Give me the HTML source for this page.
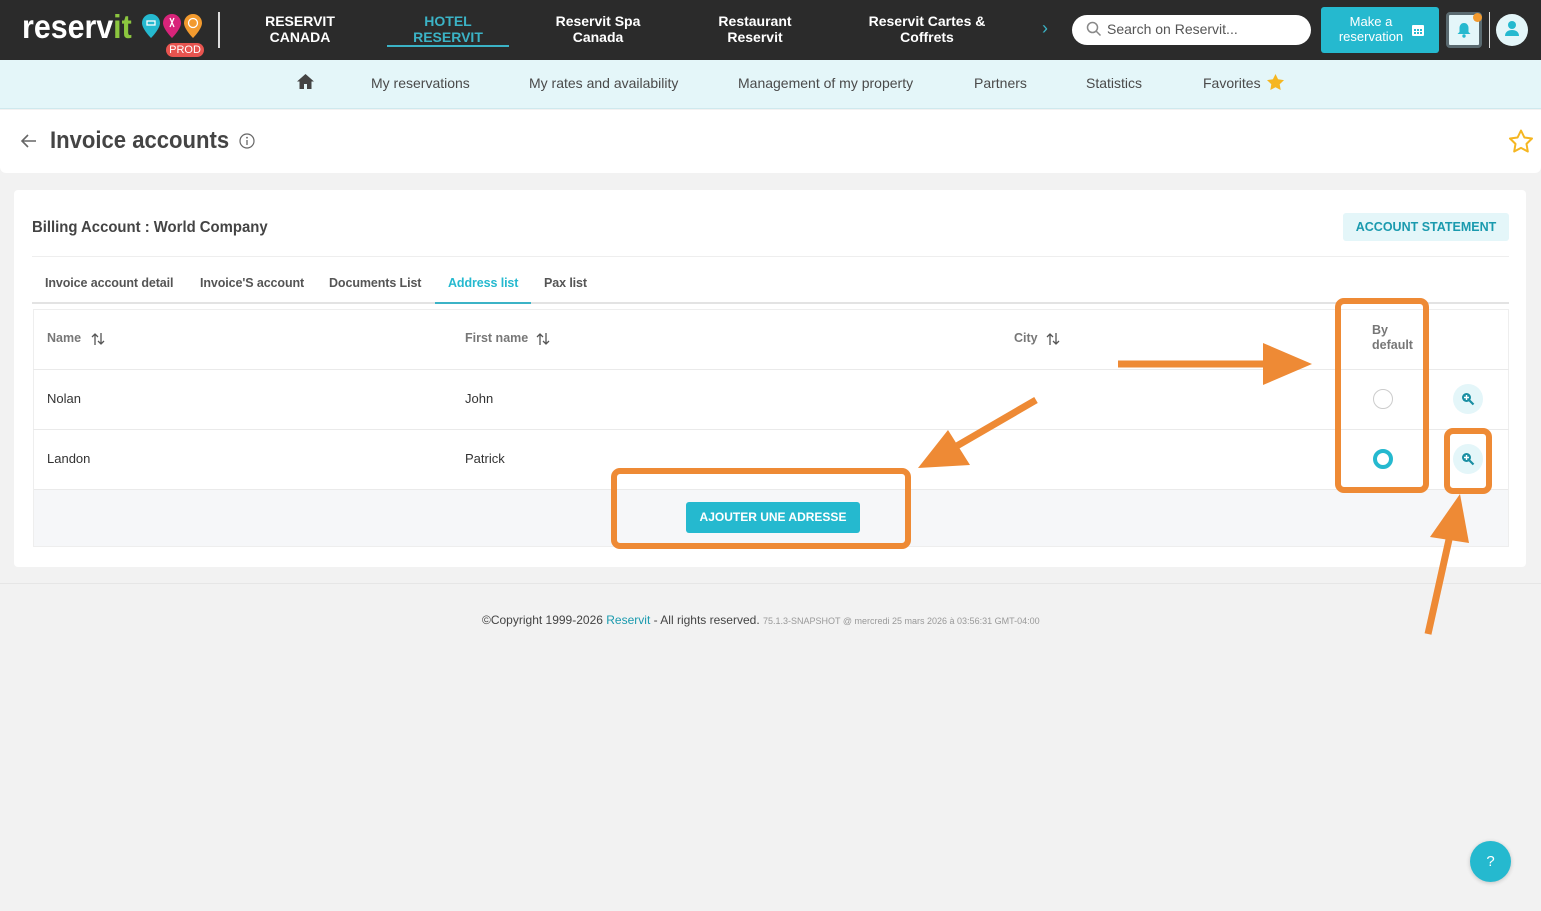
<!DOCTYPE html>
<html><head><meta charset="utf-8">
<style>
*{margin:0;padding:0;box-sizing:border-box}
body{width:1541px;height:911px;background:#f2f2f2;font-family:"Liberation Sans",Arial,sans-serif;position:relative;overflow:hidden;color:#444}
.a{position:absolute}
.top{left:0;top:0;width:1541px;height:60px;background:#2b2b2b}
.nav{color:#fff;font-weight:bold;font-size:14px;text-align:center;line-height:16px}
.sub{left:0;top:60px;width:1541px;height:49px;background:#e4f6f9;border-bottom:1px solid #cfe9ee}
.sub span{position:absolute;top:15px;font-size:14px;color:#4a4a4a}
.tabs span{position:absolute;top:276px;font-size:12.5px;font-weight:bold;color:#555;letter-spacing:-0.1px}
.th{font-size:12.5px;font-weight:bold;color:#777}
.td{font-size:13px;color:#333}
.ob{border:6px solid #ee8a35;border-radius:9px}
</style></head><body>
<div class="a top"></div>
<div class="a" style="left:22px;top:8px;font-size:33px;font-weight:bold;color:#fff;transform:scaleX(0.92);transform-origin:left top;white-space:nowrap">reserv<span style="color:#8cc63f">it</span></div>
<svg class="a" style="left:141px;top:13px" width="64" height="28" viewBox="0 0 64 28">
<path d="M10 1a9 9 0 0 1 9 9c0 6-9 15-9 15S1 16 1 10a9 9 0 0 1 9-9z" fill="#25b9cf"/>
<path d="M31 1a9 9 0 0 1 9 9c0 6-9 15-9 15S22 16 22 10a9 9 0 0 1 9-9z" fill="#d8247a"/>
<path d="M52 1a9 9 0 0 1 9 9c0 6-9 15-9 15S43 16 43 10a9 9 0 0 1 9-9z" fill="#f29a2e"/>
<rect x="6" y="8" width="8" height="4" fill="none" stroke="#fff" stroke-width="1.3"/>
<path d="M29 5l4 9M33 5l-4 9" stroke="#fff" stroke-width="1.3"/>
<circle cx="52" cy="10" r="4.5" fill="none" stroke="#fff" stroke-width="1.3"/>
</svg>
<div class="a" style="left:166px;top:43px;width:38px;height:14px;background:#e8544f;border-radius:7px;color:#fff;font-size:11px;text-align:center;line-height:14px">PROD</div>
<div class="a" style="left:218px;top:12px;width:2px;height:36px;background:#ddd"></div>
<div class="a nav" style="left:250px;top:13px;width:100px">RESERVIT<br>CANADA</div>
<div class="a nav" style="left:387px;top:13px;width:122px;color:#3bb3c6">HOTEL<br>RESERVIT</div>
<div class="a" style="left:387px;top:45px;width:122px;height:2px;background:#3bb3c6"></div>
<div class="a nav" style="left:548px;top:13px;width:100px">Reservit Spa<br>Canada</div>
<div class="a nav" style="left:705px;top:13px;width:100px">Restaurant<br>Reservit</div>
<div class="a nav" style="left:862px;top:13px;width:130px">Reservit Cartes &amp;<br>Coffrets</div>
<div class="a" style="left:1042px;top:18px;color:#3bb3c6;font-size:18px">›</div>
<div class="a" style="left:1072px;top:15px;width:239px;height:30px;background:#fff;border-radius:15px"></div>
<svg class="a" style="left:1086px;top:21px" width="16" height="16"><circle cx="6.5" cy="6.5" r="5" fill="none" stroke="#888" stroke-width="1.5"/><path d="M10 10l4.5 4.5" stroke="#888" stroke-width="1.5"/></svg>
<div class="a" style="left:1107px;top:21px;font-size:14px;color:#555">Search on Reservit...</div>
<div class="a" style="left:1321px;top:7px;width:118px;height:46px;background:#25b9cf;border-radius:3px"></div>
<div class="a" style="left:1330px;top:14px;width:82px;text-align:center;color:#fff;font-size:13px;line-height:15px">Make a<br>reservation</div>
<svg class="a" style="left:1412px;top:23px" width="12" height="13"><rect x="0" y="2" width="12" height="11" rx="1" fill="#fff"/><g fill="#25b9cf"><rect x="2" y="6" width="2" height="2"/><rect x="5" y="6" width="2" height="2"/><rect x="8" y="6" width="2" height="2"/><rect x="2" y="9" width="2" height="2"/><rect x="5" y="9" width="2" height="2"/><rect x="8" y="9" width="2" height="2"/></g></svg>
<div class="a" style="left:1446px;top:12px;width:36px;height:36px;background:#e4f6f9;border:3px solid #5a6a70;border-radius:4px"></div>
<svg class="a" style="left:1457px;top:22px" width="14" height="16"><path d="M7 1c3 0 4.5 2.5 4.5 5v4l2 2H0.5l2-2V6C2.5 3.5 4 1 7 1z" fill="#25b9cf"/><circle cx="7" cy="14" r="1.7" fill="#25b9cf"/></svg>
<div class="a" style="left:1473px;top:13px;width:9px;height:9px;background:#f29a2e;border-radius:50%"></div>
<div class="a" style="left:1489px;top:12px;width:1px;height:36px;background:#ddd"></div>
<div class="a" style="left:1496px;top:14px;width:32px;height:32px;background:#e4f6f9;border-radius:50%"></div>
<svg class="a" style="left:1504px;top:20px" width="16" height="18"><circle cx="8" cy="5" r="4" fill="#25b9cf"/><path d="M1 16c0-4 3-6 7-6s7 2 7 6z" fill="#25b9cf"/></svg>

<div class="a sub">
<svg style="position:absolute;left:297px;top:14px" width="17" height="15"><path d="M8.5 0L0 7.5h2.5V15h4.5v-5h3v5h4.5V7.5H17z" fill="#444"/></svg>
<span style="left:371px">My reservations</span>
<span style="left:529px">My rates and availability</span>
<span style="left:738px">Management of my property</span>
<span style="left:974px">Partners</span>
<span style="left:1086px">Statistics</span>
<span style="left:1203px">Favorites</span>
<svg style="position:absolute;left:1267px;top:14px" width="17" height="16"><path d="M8.5 0l2.6 5.3 5.9.8-4.3 4.1 1 5.8-5.2-2.7-5.2 2.7 1-5.8L0 6.1l5.9-.8z" fill="#f5b621"/></svg>
</div>

<div class="a" style="left:0;top:110px;width:1541px;height:63px;background:#fff;border-radius:0 0 6px 6px"></div>
<svg class="a" style="left:20px;top:134px" width="17" height="14"><path d="M16 7H2M8 1L2 7l6 6" fill="none" stroke="#666" stroke-width="1.6"/></svg>
<div class="a" style="left:50px;top:127px;font-size:24px;font-weight:bold;color:#444;transform:scaleX(0.92);transform-origin:left top;white-space:nowrap">Invoice accounts</div>
<svg class="a" style="left:239px;top:133px" width="16" height="16"><circle cx="8" cy="8" r="7" fill="none" stroke="#666" stroke-width="1.2"/><path d="M8 7v5" stroke="#666" stroke-width="1.3"/><circle cx="8" cy="4.7" r="0.9" fill="#666"/></svg>
<svg class="a" style="left:1508px;top:129px" width="26" height="25"><path d="M13 1.5l3.4 7 7.6 1-5.5 5.4 1.3 7.6L13 18.9l-6.8 3.6 1.3-7.6L2 9.5l7.6-1z" fill="none" stroke="#f5b621" stroke-width="2" stroke-linejoin="round"/></svg>

<div class="a" style="left:14px;top:190px;width:1512px;height:377px;background:#fff;border-radius:4px"></div>
<div class="a" style="left:32px;top:219px;font-size:16px;font-weight:bold;color:#444;transform:scaleX(0.93);transform-origin:left top;white-space:nowrap">Billing Account : World Company</div>
<div class="a" style="left:1343px;top:213px;width:166px;height:28px;background:#e4f6f9;border-radius:3px;color:#1a9aae;font-size:12.5px;font-weight:bold;text-align:center;line-height:28px">ACCOUNT STATEMENT</div>
<div class="a" style="left:32px;top:256px;width:1477px;height:1px;background:#eee"></div>
<div class="tabs">
<span style="left:45px">Invoice account detail</span>
<span style="left:200px">Invoice'S account</span>
<span style="left:329px">Documents List</span>
<span style="left:448px;color:#25b9cf">Address list</span>
<span style="left:544px">Pax list</span>
</div>
<div class="a" style="left:32px;top:302px;width:1477px;height:2px;background:#e3e3e3"></div>
<div class="a" style="left:435px;top:302px;width:96px;height:2px;background:#3bb3c6"></div>

<div class="a" style="left:33px;top:309px;width:1476px;height:238px;border:1px solid #eee"></div>
<div class="a" style="left:33px;top:369px;width:1476px;height:1px;background:#eaeaea"></div>
<div class="a" style="left:33px;top:429px;width:1476px;height:1px;background:#eaeaea"></div>
<div class="a" style="left:34px;top:489px;width:1474px;height:57px;background:#f6f7f9;border-top:1px solid #eaeaea"></div>
<div class="a th" style="left:47px;top:331px">Name</div>
<div class="a th" style="left:465px;top:331px">First name</div>
<div class="a th" style="left:1014px;top:331px">City</div>
<svg class="a" style="left:91px;top:332px" width="14" height="14"><path d="M4 13V2M1 5l3-3 3 3M10 1v11M7 9l3 3 3-3" fill="none" stroke="#555" stroke-width="1.3"/></svg>
<svg class="a" style="left:536px;top:332px" width="14" height="14"><path d="M4 13V2M1 5l3-3 3 3M10 1v11M7 9l3 3 3-3" fill="none" stroke="#555" stroke-width="1.3"/></svg>
<svg class="a" style="left:1046px;top:332px" width="14" height="14"><path d="M4 13V2M1 5l3-3 3 3M10 1v11M7 9l3 3 3-3" fill="none" stroke="#555" stroke-width="1.3"/></svg>
<div class="a th" style="left:1372px;top:323px;line-height:15px">By<br>default</div>
<div class="a td" style="left:47px;top:391px">Nolan</div>
<div class="a td" style="left:465px;top:391px">John</div>
<div class="a td" style="left:47px;top:451px">Landon</div>
<div class="a td" style="left:465px;top:451px">Patrick</div>
<div class="a" style="left:1373px;top:389px;width:20px;height:20px;border:1.5px solid #ccc;border-radius:50%"></div>
<div class="a" style="left:1373px;top:449px;width:20px;height:20px;border:4px solid #25b9cf;border-radius:50%"></div>
<div class="a" style="left:1453px;top:384px;width:30px;height:30px;background:#e4f6f9;border-radius:50%"></div>
<div class="a" style="left:1453px;top:444px;width:30px;height:30px;background:#e4f6f9;border-radius:50%"></div>
<svg class="a" style="left:1461px;top:392px" width="14" height="14"><circle cx="5.5" cy="5.5" r="4.5" fill="#1a8fa3"/><path d="M8.5 8.5l4 4" stroke="#1a8fa3" stroke-width="2.2"/><path d="M5.5 3v5M3 5.5h5" stroke="#fff" stroke-width="1.4"/></svg>
<svg class="a" style="left:1461px;top:452px" width="14" height="14"><circle cx="5.5" cy="5.5" r="4.5" fill="#1a8fa3"/><path d="M8.5 8.5l4 4" stroke="#1a8fa3" stroke-width="2.2"/><path d="M5.5 3v5M3 5.5h5" stroke="#fff" stroke-width="1.4"/></svg>
<div class="a" style="left:686px;top:502px;width:174px;height:31px;background:#25b9cf;border-radius:3px;color:#fff;font-size:12px;font-weight:bold;text-align:center;line-height:31px">AJOUTER UNE ADRESSE</div>

<div class="a" style="left:0;top:583px;width:1541px;height:1px;background:#e6e6e6"></div>
<div class="a" style="left:482px;top:613px;font-size:12px;color:#444;white-space:nowrap">©Copyright 1999-2026 <span style="color:#1a9aae">Reservit</span> - All rights reserved. <span style="font-size:9px;color:#999">75.1.3-SNAPSHOT @ mercredi 25 mars 2026 à 03:56:31 GMT-04:00</span></div>
<div class="a" style="left:1470px;top:841px;width:41px;height:41px;background:#25b9cf;border-radius:50%;color:#fff;text-align:center;line-height:41px;font-size:15px;box-shadow:0 1px 4px rgba(0,0,0,.2)">?</div>

<div class="a ob" style="left:1335px;top:298px;width:94px;height:195px"></div>
<div class="a ob" style="left:1444px;top:428px;width:48px;height:66px"></div>
<div class="a ob" style="left:611px;top:468px;width:300px;height:81px"></div>
<svg class="a" style="left:0;top:0" width="1541" height="911">
<g fill="#ee8a35" stroke="#ee8a35">
<path d="M1118 364H1270" stroke-width="7" fill="none"/>
<path d="M1263 343L1312 364L1263 385Z" stroke="none"/>
<path d="M1036 400L955 447" stroke-width="7" fill="none"/>
<path d="M918 468L948 430L970 465Z" stroke="none"/>
<path d="M1428 634L1450 535" stroke-width="7" fill="none"/>
<path d="M1460 494L1430 537L1469 543Z" stroke="none"/>
</g>
</svg>
</body></html>
